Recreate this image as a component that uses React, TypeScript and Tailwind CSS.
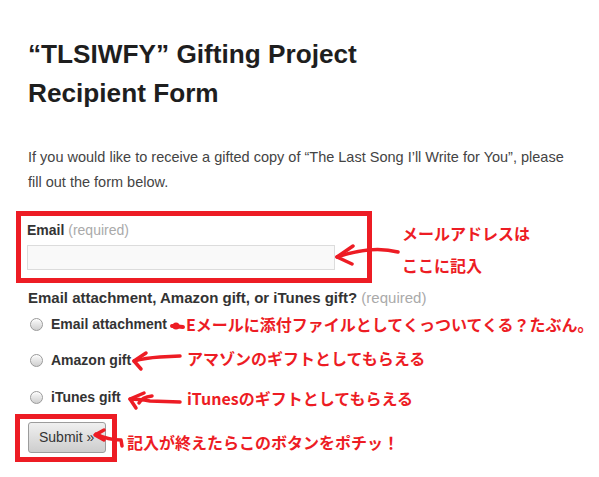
import React from "react";

const jp = { fontFamily: '"Noto Sans CJK JP", "Noto Sans", sans-serif' };

function Radio({ label }: { label: string }) {
  return (
    <div className="flex items-center h-[20px]">
      <span className="ml-[2px] w-[13px] h-[13px] rounded-full border border-[#9a9a9a] bg-gradient-to-b from-[#fbfbfb] to-[#cfcfcf] shadow-[inset_0_1px_1px_rgba(255,255,255,0.8)]" />
      <span className="ml-[8px] text-[14px] leading-[20px] font-bold text-[#333]">{label}</span>
    </div>
  );
}

export default function App() {
  return (
    <div
      className="relative w-[599px] h-[477px] bg-white overflow-hidden"
      style={{ fontFamily: '"Liberation Sans", Arial, sans-serif' }}
    >
      <div className="pl-[28px] pt-[35px]">
        <h1 className="text-[26.2px] leading-[39px] font-bold text-[#1e1e1e]">
          “TLSIWFY” Gifting Project
          <br />
          Recipient Form
        </h1>
        <p className="mt-[32px] text-[14.5px] leading-[25px] text-[#444]">
          If you would like to receive a gifted copy of “The Last Song I’ll Write for You”, please
          <br />
          fill out the form below.
        </p>

        <div className="-ml-[12px] mt-[16px] w-[356px] h-[72px] border-[5px] border-[#ed1c24] pl-[6px] pt-[4px]">
          <div className="text-[14px] leading-[20px] text-[#333]">
            <span className="font-bold">Email</span>{" "}
            <span className="text-[#aaa]">(required)</span>
          </div>
          <div className="mt-[5px] w-[308px] h-[25px] border border-[#dcdcdc] bg-[#f9f9f9]" />
        </div>

        <div className="mt-[5px] text-[15px] leading-[20px] text-[#333]">
          <span className="font-bold">Email attachment, Amazon gift, or iTunes gift?</span>{" "}
          <span className="text-[#aaa]">(required)</span>
        </div>

        <div className="mt-[6px]">
          <Radio label="Email attachment" />
        </div>
        <div className="mt-[16px]">
          <Radio label="Amazon gift" />
        </div>
        <div className="mt-[17px]">
          <Radio label="iTunes gift" />
        </div>

        <div className="-ml-[13px] mt-[7px] w-[102px] h-[48px] border-[5px] border-[#ed1c24] pl-[8px] pt-[3px]">
          <button className="w-[78px] h-[31px] rounded-[3px] border border-[#9c9c9c] bg-gradient-to-b from-[#f0f0f0] to-[#cdcdcd] text-[14px] text-[#333] text-left pl-[10px]">
            Submit »
          </button>
        </div>
      </div>

      {/* annotations */}
      <div className="absolute left-[402px] top-[217px] text-[16px] leading-[32px] font-bold text-[#ed1c24]" style={jp}>
        メールアドレスは
        <br />
        ここに記入
      </div>
      <div className="absolute left-[186px] top-[316px] text-[16px] leading-[16px] font-bold text-[#ed1c24] whitespace-nowrap" style={jp}>
        Eメールに添付ファイルとしてくっついてくる？たぶん。
      </div>
      <div className="absolute left-[187px] top-[350px] text-[16px] leading-[16px] font-bold text-[#ed1c24] whitespace-nowrap" style={jp}>
        アマゾンのギフトとしてもらえる
      </div>
      <div className="absolute left-[187px] top-[390px] text-[16px] leading-[16px] font-bold text-[#ed1c24] whitespace-nowrap" style={jp}>
        iTunesのギフトとしてもらえる
      </div>
      <div className="absolute left-[127px] top-[434px] text-[16px] leading-[16px] font-bold text-[#ed1c24] whitespace-nowrap" style={jp}>
        記入が終えたらこのボタンをポチッ！
      </div>

      <svg className="absolute left-0 top-0 pointer-events-none" width="599" height="477" viewBox="0 0 599 477">
        <g fill="none" stroke="#ed1c24" strokeWidth="3.5" strokeLinecap="round" strokeLinejoin="round">
          <path d="M398 252 Q 372 245 337 257" />
          <path d="M353 246 L337 257 L352 264" />
          <path d="M172 326 L183 327" strokeWidth="4" />
          <path d="M180 356 L160 357 Q 145 358 134 361" />
          <path d="M146 353 L134 361 L141 369" />
          <path d="M180 402 L150 401 Q 138 399 130 399" />
          <path d="M144 393 L130 399 L136 408" />
          <path d="M152 396 Q 142 397 139 403" />
          <path d="M122 446 L121 440 Q 108 440 96 434" />
          <path d="M104 430 L95 435 L104 440" />
        </g>
        <circle cx="176" cy="326" r="3.5" fill="#ed1c24" />
      </svg>
    </div>
  );
}
